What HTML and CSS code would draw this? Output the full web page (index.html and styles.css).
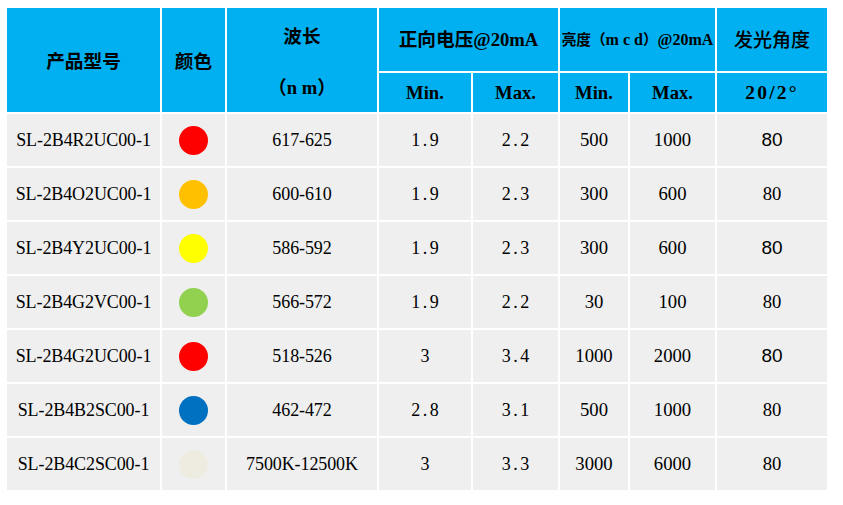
FILE: index.html
```html
<!DOCTYPE html>
<html lang="zh-CN">
<head>
<meta charset="utf-8">
<title>LED 规格表</title>
<link rel="stylesheet" href="styles.css">
</head>
<body>
<table class="spec">
  <colgroup>
    <col class="c-model"><col class="c-color"><col class="c-wl"><col class="c-vmin"><col class="c-vmax"><col class="c-bmin"><col class="c-bmax"><col class="c-angle">
  </colgroup>
  <thead>
    <tr class="hr1">
      <th rowspan="2" class="zh">产品型号</th>
      <th rowspan="2" class="zh">颜色</th>
      <th rowspan="2" class="zh wl"><div class="wl-line">波长</div><div class="wl-line">（<span class="lat">n m</span>）</div></th>
      <th colspan="2" class="zh mix">正向电压<span class="lat">@20mA</span></th>
      <th colspan="2" class="zh mix small">亮度（<span class="lat">m c d</span>）<span class="lat">@20mA</span></th>
      <th class="zh angle">发光角度</th>
    </tr>
    <tr class="hr2">
      <th class="lat">Min.</th>
      <th class="lat">Max.</th>
      <th class="lat">Min.</th>
      <th class="lat">Max.</th>
      <th class="lat wide">20/2°</th>
    </tr>
  </thead>
  <tbody>
    <tr>
      <td class="sim">SL-2B4R2UC00-1</td><td><span class="dot red"></span></td><td class="sim">617-625</td>
      <td class="sim volt">1.9</td><td class="sim volt">2.2</td><td class="tnr">500</td><td class="tnr">1000</td><td class="ari">80</td>
    </tr>
    <tr>
      <td class="sim">SL-2B4O2UC00-1</td><td><span class="dot orange"></span></td><td class="sim">600-610</td>
      <td class="sim volt">1.9</td><td class="sim volt">2.3</td><td class="tnr">300</td><td class="tnr">600</td><td class="tnr">80</td>
    </tr>
    <tr>
      <td class="sim">SL-2B4Y2UC00-1</td><td><span class="dot yellow"></span></td><td class="sim">586-592</td>
      <td class="sim volt">1.9</td><td class="sim volt">2.3</td><td class="tnr">300</td><td class="tnr">600</td><td class="ari">80</td>
    </tr>
    <tr>
      <td class="sim">SL-2B4G2VC00-1</td><td><span class="dot green"></span></td><td class="sim">566-572</td>
      <td class="sim volt">1.9</td><td class="sim volt">2.2</td><td class="tnr">30</td><td class="tnr">100</td><td class="tnr">80</td>
    </tr>
    <tr>
      <td class="sim">SL-2B4G2UC00-1</td><td><span class="dot red"></span></td><td class="sim">518-526</td>
      <td class="sim volt">3</td><td class="sim volt">3.4</td><td class="tnr">1000</td><td class="tnr">2000</td><td class="ari">80</td>
    </tr>
    <tr>
      <td class="sim">SL-2B4B2SC00-1</td><td><span class="dot blue"></span></td><td class="sim">462-472</td>
      <td class="sim volt">2.8</td><td class="sim volt">3.1</td><td class="tnr">500</td><td class="tnr">1000</td><td class="tnr">80</td>
    </tr>
    <tr>
      <td class="sim">SL-2B4C2SC00-1</td><td><span class="dot white"></span></td><td class="sim">7500K-12500K</td>
      <td class="sim volt">3</td><td class="sim volt">3.3</td><td class="tnr">3000</td><td class="tnr">6000</td><td class="tnr">80</td>
    </tr>
  </tbody>
</table>
</body>
</html>
```
FILE: styles.css
```css
html, body {
  margin: 0;
  padding: 0;
  background: #ffffff;
}

.spec {
  margin: 6px 0 0 5px;
  width: 824px;
  table-layout: fixed;
  border-collapse: separate;
  border-spacing: 2px;
  color: #000000;
}

.c-model { width: 153px; }
.c-color { width: 63px; }
.c-wl { width: 150px; }
.c-vmin { width: 92px; }
.c-vmax { width: 85px; }
.c-bmin { width: 68px; }
.c-bmax { width: 85px; }
.c-angle { width: 110px; }

.spec th,
.spec td {
  padding: 0;
  text-align: center;
  vertical-align: middle;
  white-space: nowrap;
  overflow: visible;
}

.spec th {
  background: #00b0f0;
}

.hr1 th { height: 63px; }
.hr2 th { height: 39px; }
.spec tbody td {
  height: 52px;
  background: #efefef;
}

.zh {
  font-family: "Noto Sans CJK SC", "Noto Sans CJK TC", sans-serif;
  font-weight: 700;
  font-size: 18.67px;
  line-height: 1.2;
}

.lat {
  font-family: "Liberation Serif", "Noto Sans CJK SC", serif;
  font-weight: 700;
  font-size: 18.67px;
}

.wide {
  letter-spacing: 2.2px;
  font-size: 19.5px;
}

.small {
  font-size: 14.67px;
}

.small .lat {
  font-size: 16px;
}

.angle {
  font-weight: 500;
  font-size: 19px;
}

.wl-line {
  line-height: 51px;
  height: 51px;
}

.sim {
  font-family: "Liberation Serif", serif;
  font-size: 18px;
  letter-spacing: -0.1px;
  font-weight: 400;
}

.volt {
  letter-spacing: 2.5px;
  text-indent: 2.5px;
}

.tnr {
  font-family: "Liberation Serif", serif;
  font-size: 18.67px;
}

.ari {
  font-family: "Liberation Sans", sans-serif;
  font-size: 19px;
}

.dot {
  display: inline-block;
  width: 29px;
  height: 29px;
  border-radius: 50%;
  vertical-align: middle;
}

.red { background: #ff0000; }
.orange { background: #ffc000; }
.yellow { background: #ffff00; }
.green { background: #92d050; }
.blue { background: #0070c0; }
.white { background: #eeece1; }
```
